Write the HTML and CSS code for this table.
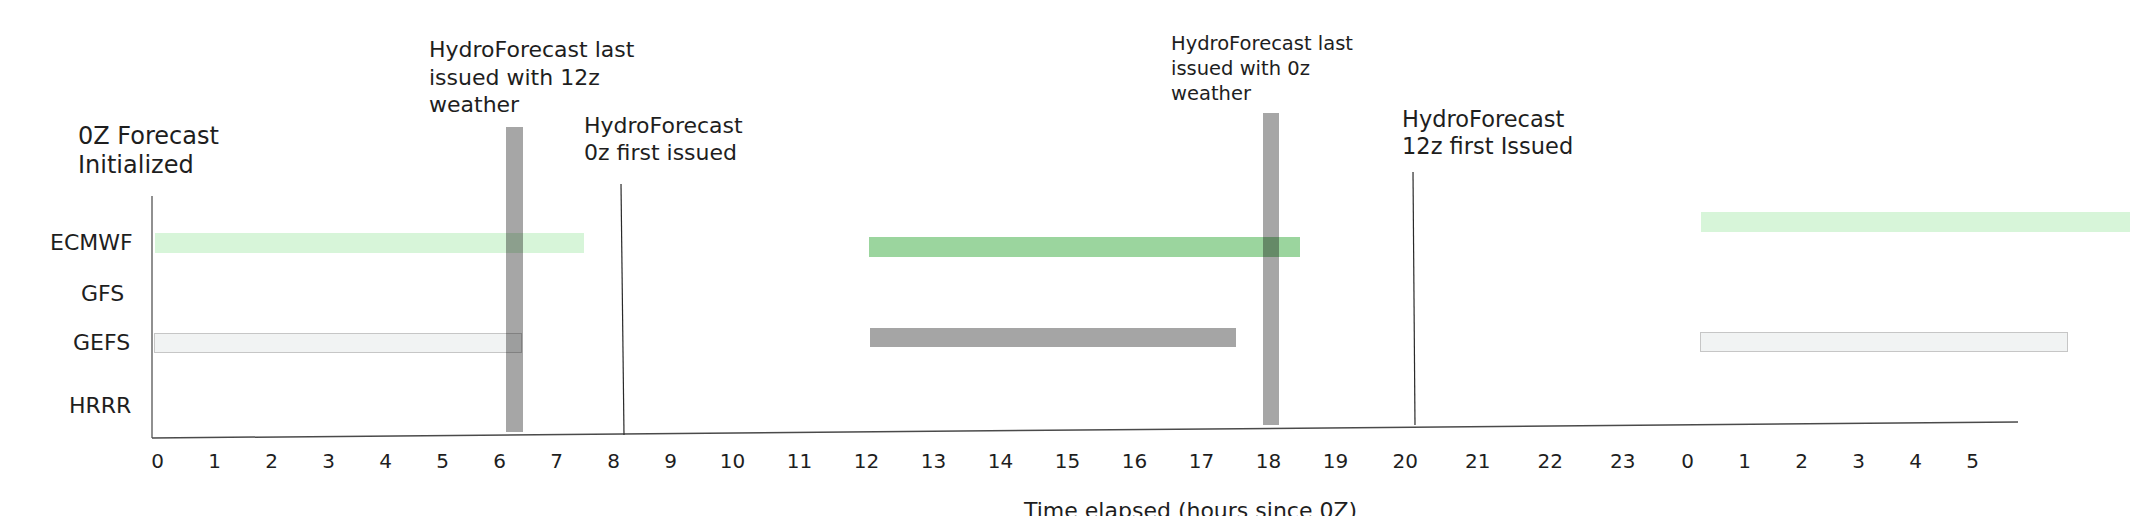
FILE: index.html
```html
<!DOCTYPE html>
<html lang="en">
<head>
<meta charset="utf-8">
<title>HydroForecast timing</title>
<link rel="stylesheet" href="styles.css">
</head>
<body>
<div class="canvas">
  <svg class="shapes" width="2136" height="516" viewBox="0 0 2136 516" xmlns="http://www.w3.org/2000/svg">
    <!-- ECMWF bars -->
    <rect x="155" y="233" width="429" height="20" fill="#d7f5d9"/>
    <rect x="869" y="237" width="431" height="20" fill="#9bd59e"/>
    <rect x="1701" y="212" width="429" height="20" fill="#d7f5d9"/>
    <!-- GEFS bars -->
    <rect x="154.5" y="333.5" width="367" height="19" fill="#f1f3f3" stroke="#c6c6c6" stroke-width="1"/>
    <rect x="870" y="328" width="366" height="19" fill="#a5a5a5"/>
    <rect x="1700.5" y="332.5" width="367" height="19" fill="#f1f3f3" stroke="#c6c6c6" stroke-width="1"/>
    <!-- HydroForecast issue markers -->
    <rect x="506" y="127" width="17" height="305" fill="rgba(0,0,0,0.35)"/>
    <rect x="1263" y="113" width="16" height="312" fill="rgba(0,0,0,0.35)"/>
    <!-- axes -->
    <line x1="152" y1="196" x2="152" y2="438" stroke="#6b6b6b" stroke-width="1.5"/>
    <line x1="152" y1="438" x2="2018" y2="422" stroke="#4a4a4a" stroke-width="1.5"/>
    <!-- first-issued lines -->
    <line x1="621" y1="184" x2="624" y2="435" stroke="#2a2a2a" stroke-width="1.2"/>
    <line x1="1413" y1="172" x2="1415" y2="425" stroke="#2a2a2a" stroke-width="1.2"/>
  </svg>

  <div class="title">Weather data timing (typical)</div>

  <div class="note n-init">0Z Forecast<br>Initialized</div>
  <div class="note n-last12">HydroForecast last<br>issued with 12z<br>weather</div>
  <div class="note n-first0">HydroForecast<br>0z first issued</div>
  <div class="note n-last0">HydroForecast last<br>issued with 0z<br>weather</div>
  <div class="note n-first12">HydroForecast<br>12z first Issued</div>

  <div class="model m-ecmwf">ECMWF</div>
  <div class="model m-gfs">GFS</div>
  <div class="model m-gefs">GEFS</div>
  <div class="model m-hrrr">HRRR</div>

  <div class="ticks">
    <span class="tk">0</span><span class="tk">1</span><span class="tk">2</span><span class="tk">3</span><span class="tk">4</span><span class="tk">5</span><span class="tk">6</span><span class="tk">7</span><span class="tk">8</span><span class="tk">9</span><span class="tk teen">10</span><span class="tk teen">11</span><span class="tk teen">12</span><span class="tk teen">13</span><span class="tk teen">14</span><span class="tk teen">15</span><span class="tk teen">16</span><span class="tk teen">17</span><span class="tk teen">18</span><span class="tk teen">19</span><span class="tk tw">20</span><span class="tk tw">21</span><span class="tk tw">22</span><span class="tk tw">23</span><span class="tk">0</span><span class="tk">1</span><span class="tk">2</span><span class="tk">3</span><span class="tk">4</span><span class="tk">5</span>
  </div>

  <div class="xlabel">Time elapsed (hours since 0Z)</div>
</div>
</body>
</html>
```

FILE: styles.css
```css
html, body {
  margin: 0;
  padding: 0;
  background: #ffffff;
}

body {
  font-family: "DejaVu Sans", "Liberation Sans", sans-serif;
  color: #1e1e1e;
}

.canvas {
  position: relative;
  width: 2136px;
  height: 516px;
  overflow: hidden;
  background: #ffffff;
}

.shapes {
  position: absolute;
  left: 0;
  top: 0;
  display: block;
}

.title {
  position: absolute;
  left: 890px;
  top: -34px;
  font-size: 30px;
  line-height: 36px;
  white-space: nowrap;
}

.note {
  position: absolute;
  white-space: nowrap;
  font-size: 22px;
  line-height: 27px;
  letter-spacing: 0;
}

.n-init {
  left: 78px;
  top: 122px;
  font-size: 24px;
  line-height: 29px;
}

.n-last12 {
  left: 429px;
  top: 36px;
  line-height: 27.7px;
}

.n-first0 {
  left: 584px;
  top: 112px;
}

.n-last0 {
  left: 1171px;
  top: 31px;
  font-size: 19.5px;
  line-height: 25px;
}

.n-first12 {
  left: 1402px;
  top: 106px;
  font-size: 22.5px;
}

.model {
  position: absolute;
  font-size: 22px;
  line-height: 27px;
  white-space: nowrap;
}

.m-ecmwf { left: 50px;  top: 229px; }
.m-gfs   { left: 81px;  top: 280px; }
.m-gefs  { left: 73px;  top: 329px; }
.m-hrrr  { left: 69px;  top: 392px; }

.ticks {
  position: absolute;
  left: 129px;
  top: 449px;
  display: flex;
  font-size: 20px;
  line-height: 24px;
}

.tk {
  flex: none;
  width: 57px;
  text-align: center;
}

.tk.teen { width: 67px; }
.tk.tw   { width: 72.5px; }

.xlabel {
  position: absolute;
  left: 1024px;
  top: 497px;
  font-size: 22px;
  line-height: 27px;
  white-space: nowrap;
}
```
